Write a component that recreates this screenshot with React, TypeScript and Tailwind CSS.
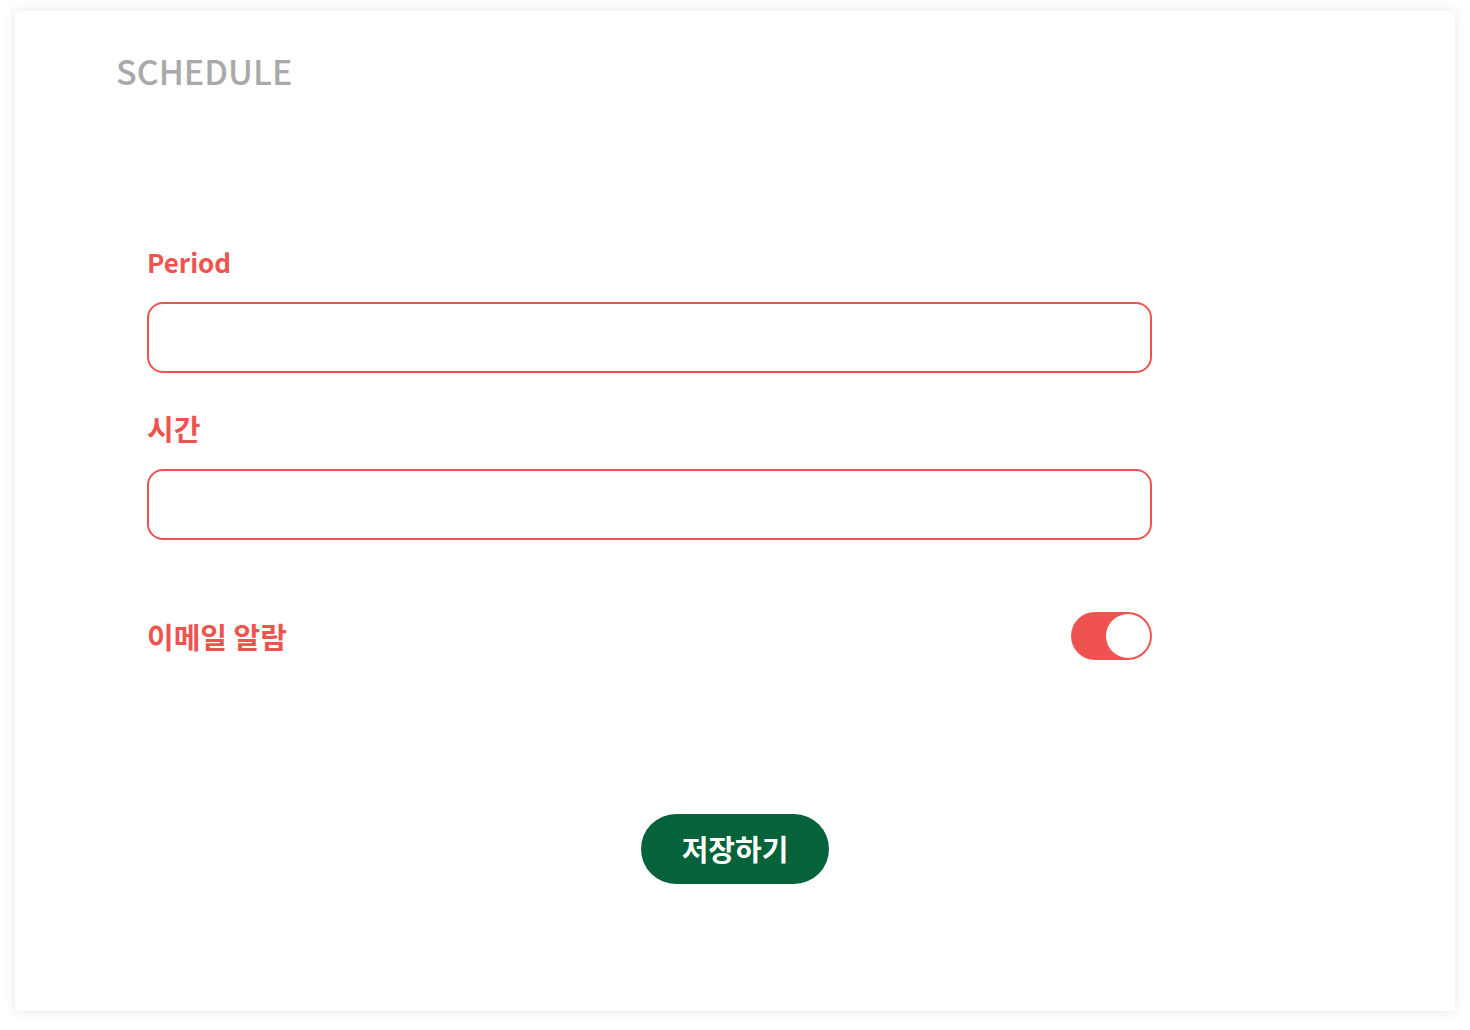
import { useState } from "react";

const Field = ({ label, labelSize, top }: { label: string; labelSize: string; top: string }) => {
  return (
    <div className={`flex flex-col ${top}`}>
      <label className={`${labelSize} h-[27px] leading-[27px] font-bold text-[#ef5350]`}>{label}</label>
      <input className="mt-[27px] h-[71px] w-full rounded-[16px] border-2 border-[#ef5350] bg-white px-5 text-[22px] outline-none" />
    </div>
  );
};

const App = () => {
  const [emailAlarm, setEmailAlarm] = useState(true);

  return (
    <div
      className="min-h-screen bg-white pt-[11px] pl-[15px]"
      style={{ fontFamily: '"Noto Sans CJK KR", "Noto Sans", sans-serif' }}
    >
      <div className="flex h-[1000px] w-[1440px] flex-col bg-white shadow-[0_0_12px_rgba(0,0,0,0.1)]">
        <h1 className="pl-[101px] pt-[43px] text-[34px] leading-[34px] font-medium text-[#a9a9a9]">SCHEDULE</h1>

        <div className="ml-[132px] mt-[160px] flex w-[1005px] flex-col">
          <Field label="Period" labelSize="text-[26px]" top="" />
          <Field label="시간" labelSize="text-[29px]" top="mt-[42px]" />

          <div className="mt-[72px] flex h-[48px] items-center justify-between">
            <span className="text-[29px] leading-[29px] font-bold text-[#ef5350]">이메일 알람</span>
            <button
              onClick={() => setEmailAlarm(!emailAlarm)}
              className={`flex h-[48px] w-[81px] items-center rounded-full p-[2px] ${
                emailAlarm ? "justify-end bg-[#ef5350]" : "justify-start bg-[#dddddd]"
              }`}
            >
              <span className="h-[44px] w-[44px] rounded-full bg-white" />
            </button>
          </div>
        </div>

        <div className="mt-[154px] flex justify-center">
          <button className="h-[70px] w-[188px] rounded-full bg-[#05623b] text-[29px] font-bold text-white">
            저장하기
          </button>
        </div>
      </div>
    </div>
  );
};

export default App;
